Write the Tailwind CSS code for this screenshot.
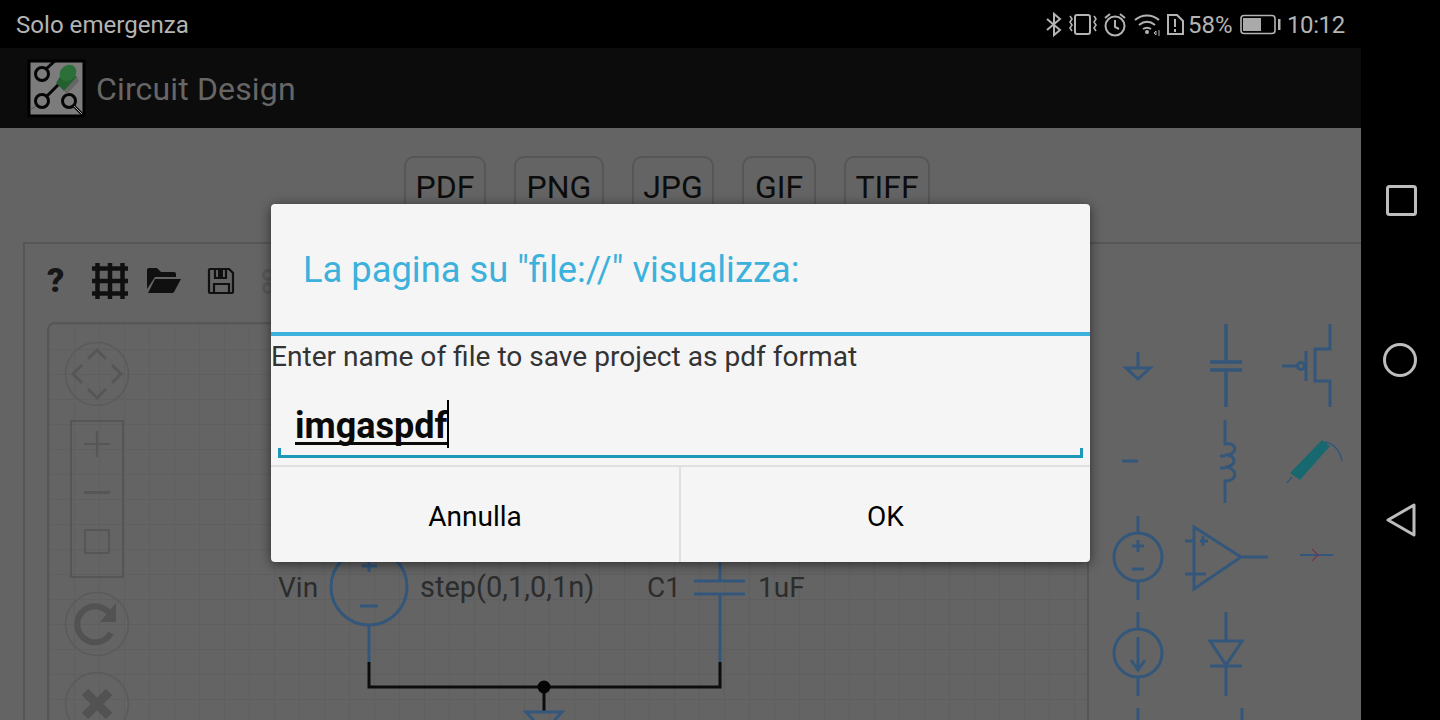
<!DOCTYPE html>
<html lang="it">
<head>
<meta charset="utf-8">
<title>Circuit Design</title>
<script src="https://cdn.jsdelivr.net/npm/@tailwindcss/browser@4"></script>
</head>
<body class="m-0 bg-black font-[Roboto,'Noto_Sans',sans-serif]">
<div class="flex h-[720px] w-[1440px] overflow-hidden bg-black">
  <div class="flex h-[720px] w-[1361px] flex-col">
    <!-- status bar -->
    <div class="flex h-12 shrink-0 items-center justify-between bg-black pl-4 pr-4 pt-[2px] text-[24px] text-[#b4b4b4]">
      <span class="text-[24.100px]">Solo emergenza</span>
      <div class="flex items-center">
        <svg width="146" height="32" viewBox="1040 9 146 32" fill="none" stroke="#b4b4b4" stroke-width="2">
          <path d="M1048 19l13 11-6 5V14l6 5-13 11"/>
          <rect x="1076" y="15" width="15" height="19" rx="2"/>
          <path d="M1071 16l2 3-2 3 2 3-2 3 2 3M1095 16l2 3-2 3 2 3-2 3 2 3" stroke-width="1.600"/>
          <circle cx="1116" cy="26" r="9.500"/>
          <path d="M1116 20v7l4 2M1106 18l5-4M1126 18l-5-4"/>
          <path d="M1136 20c7-6 17-6 24 0M1140 25c5-4 11-4 16 0M1144 29c3-2 5-2 8 0"/>
          <circle cx="1148" cy="32" r="2" fill="#b4b4b4" stroke="none"/>
          <path d="M1155 33l2-2v4zM1160 30v6" stroke-width="1"/>
          <path d="M1169 15h9l6 6v13h-15z"/>
          <path d="M1176 19v8M1176 29v3"/>
        </svg>
        <span class="ml-[3px] w-[46px] text-[24px]">58%</span>
        <svg width="42" height="32" viewBox="1239 9 42 32" class="ml-[5px]" fill="none" stroke="#b4b4b4">
          <rect x="1241" y="15.500" width="34" height="18" rx="3" stroke-width="1.600"/>
          <rect x="1243" y="18" width="18" height="13" fill="#aaaaaa" stroke="none"/>
          <rect x="1278" y="19" width="2.500" height="11" fill="#b4b4b4" stroke="none"/>
        </svg>
        <span class="ml-[6px] w-[58px] text-[24px] tracking-[-0.4px]">10:12</span>
      </div>
    </div>
    <!-- app bar -->
    <div class="flex h-20 shrink-0 items-center gap-[10px] bg-[#0c0c0c] pl-[27px]">
      <svg width="59" height="59" viewBox="0 0 59 59" class="shrink-0">
        <rect x="2" y="2" width="55" height="55" fill="#7c7c7c" stroke="#000" stroke-width="3"/>
        <g fill="none" stroke="#050505" stroke-width="3">
          <circle cx="15" cy="15" r="6.500"/><path d="M19 10l10-9"/>
          <circle cx="15" cy="42" r="6.500"/><path d="M20 37l18-18"/>
          <circle cx="42" cy="42" r="6.500"/><path d="M47 47l10 10"/>
        </g>
        <path d="M47 47l8 8" stroke="#aaa" stroke-width="1"/>
        <path d="M9 47l-6 4" stroke="#555" stroke-width="1"/>
        <path d="M38 9l12 9-13 14-8-8z" fill="#245f30"/>
        <ellipse cx="41" cy="14" rx="9" ry="7.500" fill="#2a7038" transform="rotate(-40 41 14)"/>
        <path d="M37 32l13-14 2 4-12 13z" fill="#666"/>
      </svg>
      <span class="pt-[2px] text-[32px] leading-none tracking-[0.15px] text-[#666]">Circuit Design</span>
    </div>
    <!-- content -->
    <div class="relative min-h-0 flex-1 overflow-hidden bg-[#646464]">
      <div class="flex h-[114px] items-start pl-[404px] pt-[28px] text-[32px] leading-none text-[#0c0c0c]">
        <div class="mr-[28px] flex h-[64px] w-[82px] justify-center rounded-[10px] border-2 border-[#565656] pt-[13px]">PDF</div>
        <div class="mr-[28px] flex h-[64px] w-[90px] justify-center rounded-[10px] border-2 border-[#565656] pt-[13px]">PNG</div>
        <div class="mr-[28px] flex h-[64px] w-[82px] justify-center rounded-[10px] border-2 border-[#565656] pt-[13px]">JPG</div>
        <div class="mr-[28px] flex h-[64px] w-[74px] justify-center rounded-[10px] border-2 border-[#565656] pt-[13px]">GIF</div>
        <div class="flex h-[64px] w-[86px] justify-center rounded-[10px] border-2 border-[#565656] pt-[13px]">TIFF</div>
      </div>
      <!-- panel -->
      <div class="ml-[23px] h-[480px] border-l-2 border-t-2 border-[#565656]">
        <div class="flex h-[78px] items-center pl-[22px]">
          <span class="w-[45px] pb-[6px] text-[34px] font-black leading-none text-[#161616]">?</span>
          <svg width="36" height="36" viewBox="0 0 36 36" class="mb-[4px] mr-[18px]" fill="none" stroke="#101010" stroke-width="4.500">
            <path d="M5.500 0v36M18 0v36M30.500 0v36M0 5.500h36M0 18h36M0 30.500h36"/>
          </svg>
          <svg width="36" height="28" viewBox="0 0 36 28" class="mb-[4px] mr-[25px]">
            <path d="M1 3a2 2 0 0 1 2-2h8l4 4h13a2 2 0 0 1 2 2v3H9L1 22z" fill="#101010"/>
            <path d="M9 12h26l-7 13a2 2 0 0 1-2 1H2z" fill="#101010"/>
          </svg>
          <svg width="28" height="28" viewBox="0 0 28 28" class="mb-[4px] mr-[27px]" fill="none" stroke="#101010" stroke-width="2.200">
            <path d="M2 3a1 1 0 0 1 1-1h19l4 4v19a1 1 0 0 1-1 1H3a1 1 0 0 1-1-1z"/>
            <path d="M8 2v9h11V2M7 26V17h15v9"/>
            <rect x="11" y="2" width="5" height="8" fill="#101010" stroke="none"/>
          </svg>
          <svg width="12" height="28" viewBox="0 0 12 28" class="mb-[2px]" fill="none" stroke="#585858" stroke-width="3">
            <circle cx="6" cy="7" r="4.500"/><circle cx="6" cy="20" r="4.500"/>
          </svg>
        </div>
        <!-- drawing canvas -->
        <div class="relative ml-[22px] h-[420px] w-[1042px] rounded-[8px] border-2 border-[#565656] bg-[linear-gradient(#5f5f5f_1px,transparent_1px),linear-gradient(90deg,#5f5f5f_1px,transparent_1px)] bg-size-[25px_25px]">
          <div class="flex w-[96px] flex-col items-center pt-[17px]">
            <svg width="66" height="66" viewBox="0 0 66 66" fill="none" stroke="#5a5a5a">
              <circle cx="33" cy="33" r="31.500" stroke-width="1.500"/>
              <path d="M24 18l9-9 9 9M24 48l9 9 9-9M18 24l-9 9 9 9M48 24l9 9-9 9" stroke-width="3" stroke="#565656"/>
            </svg>
            <div class="mt-[13px] flex h-[158px] w-[54px] flex-col items-center border-2 border-[#565656] pt-[8px]">
              <svg width="28" height="28" viewBox="0 0 28 28" fill="none" stroke="#565656" stroke-width="2.200"><path d="M14 1v26M1 14h26"/></svg>
              <div class="mt-[33px] h-[3px] w-[26px] bg-[#565656]"></div>
              <div class="mt-[35px] h-[25px] w-[26px] border-2 border-[#565656]"></div>
            </div>
            <svg width="66" height="66" viewBox="0 0 66 66" fill="none" stroke="#5a5a5a" class="mt-[13px]">
              <circle cx="33" cy="33" r="31.500" stroke-width="1.500"/>
              <path d="M47 42a18 18 0 1 1-1-19" stroke="#525252" stroke-width="6"/>
              <path d="M52 12v19H36z" fill="#525252" stroke="none"/>
            </svg>
            <svg width="66" height="66" viewBox="0 0 66 66" fill="none" stroke="#5a5a5a" class="mt-[14px]">
              <circle cx="33" cy="33" r="31.500" stroke-width="1.500"/>
              <path d="M21 21l24 24M45 21L21 45" stroke="#525252" stroke-width="9"/>
            </svg>
          </div>
        </div>
      </div>
      <!-- free canvas: circuit and symbol palette, page coordinates -128 -->
      <svg class="pointer-events-none absolute left-0 top-0" width="1361" height="592" viewBox="0 128 1361 592" fill="none" stroke="#33567b" stroke-width="3">
        <g font-family="Roboto" font-size="28" fill="#2c2c2c" stroke="none">
          <text x="278" y="597">Vin</text>
          <text x="420" y="597" font-size="29">step(0,1,0,1n)</text>
          <text x="647" y="597">C1</text>
          <text x="758" y="597">1uF</text>
        </g>
        <circle cx="369" cy="587" r="38"/>
        <path d="M369 625v37M369 556v16M362 566h15M360 606h18M720 562v19M720 594v68M694 581h51M694 594h51"/>
        <path d="M369 662v25h351v-25M544 687v25" stroke="#0c0c0c"/>
        <circle cx="544" cy="687" r="6.500" fill="#050505" stroke="none"/>
        <path d="M526 712h36l-18 20z"/>
        <!-- palette -->
        <path d="M1138 352v16M1126 368h24l-12 11z"/>
        <path d="M1226 324v38M1226 370v37M1210 362h32M1210 370h32" stroke-width="3.500"/>
        <path d="M1282 366h16M1306 351v30M1330 324v25h-15v32h15v26"/>
        <circle cx="1301" cy="366" r="3.500"/>
        <path d="M1122 461h16"/>
        <path d="M1225 420v24c14-2 12 12 0 11 12-1 12 12 0 12 12 0 14 14 0 14v22"/>
        <path d="M1220 456h5M1220 468h5"/>
        <path d="M1290 473l32-33 8 6-30 34z" fill="#186870" stroke="none"/>
        <path d="M1292 477l-5 6M1325 442c8 1 15 8 17 19" stroke-width="1.500"/>
        <circle cx="1138" cy="557" r="24"/>
        <path d="M1138 516v17M1138 581v19M1132 546h12M1138 540v12M1132 569h12"/>
        <path d="M1194 527l47 30-47 32zM1185 541h9M1185 574h21M1241 557h27M1200 541h8M1203 536v10"/>
        <path d="M1300 555h33" stroke-width="2"/>
        <path d="M1312 549l6 6-6 6" stroke="#6e3a57" stroke-width="1.500"/>
        <circle cx="1138" cy="653" r="24"/>
        <path d="M1138 612v17M1138 677v19M1138 637v32M1131 660l7 10 7-10"/>
        <path d="M1226 612v29M1226 666v30M1210 641h32l-16 24zM1210 666h32"/>
        <path d="M1138 708v12M1242 708v12"/>
      </svg>
      <!-- dialog -->
      <div class="absolute left-[271px] top-[76px] flex h-[358px] w-[819px] flex-col rounded-[4px] bg-[#f5f5f5] shadow-[0_2px_12px_rgba(0,0,0,0.55)]">
        <div class="h-[132px] shrink-0 border-b-4 border-[#3cb1dc] pl-[32px] pt-[45px] text-[36.300px] leading-[42px] text-[#3cb1dc]">La pagina su "file://" visualizza:</div>
        <p class="m-0 h-[44px] shrink-0 text-[28.100px] leading-[42px] text-[#333]">Enter name of file to save project as pdf format</p>
        <div class="relative mx-[7px] flex h-[78px] shrink-0 items-start border-b-[3px] border-[#1c98b8] pl-[17px] pt-[20px]">
          <span class="mt-[2px] text-[36px] font-bold leading-[48px] text-[#0a0a0a] underline decoration-[3px] underline-offset-[4px] [text-decoration-skip-ink:none]">imgaspdf</span>
          <span class="h-[48px] w-[2px] bg-black"></span>
          <span class="absolute bottom-0 left-0 h-[7px] w-[3px] bg-[#1c98b8]"></span>
          <span class="absolute bottom-0 right-0 h-[7px] w-[3px] bg-[#1c98b8]"></span>
        </div>
        <div class="mt-[7px] flex min-h-0 flex-1 border-t-2 border-[#e0e0e0] text-[28px] text-black">
          <div class="flex w-[410px] items-center justify-center border-r-2 border-[#e0e0e0] pt-[5px]">Annulla</div>
          <div class="flex flex-1 items-center justify-center pt-[5px]">OK</div>
        </div>
      </div>
    </div>
  </div>
  <!-- navigation bar -->
  <div class="w-[79px] bg-black">
    <svg width="79" height="720" viewBox="1361 0 79 720" fill="none" stroke="#bdbdbd" stroke-width="3">
      <rect x="1387.500" y="186.500" width="28" height="28" rx="2"/>
      <circle cx="1400" cy="360" r="15.500"/>
      <path d="M1414 505v30l-26-15z" stroke-linejoin="round"/>
    </svg>
  </div>
</div>
</body>
</html>
